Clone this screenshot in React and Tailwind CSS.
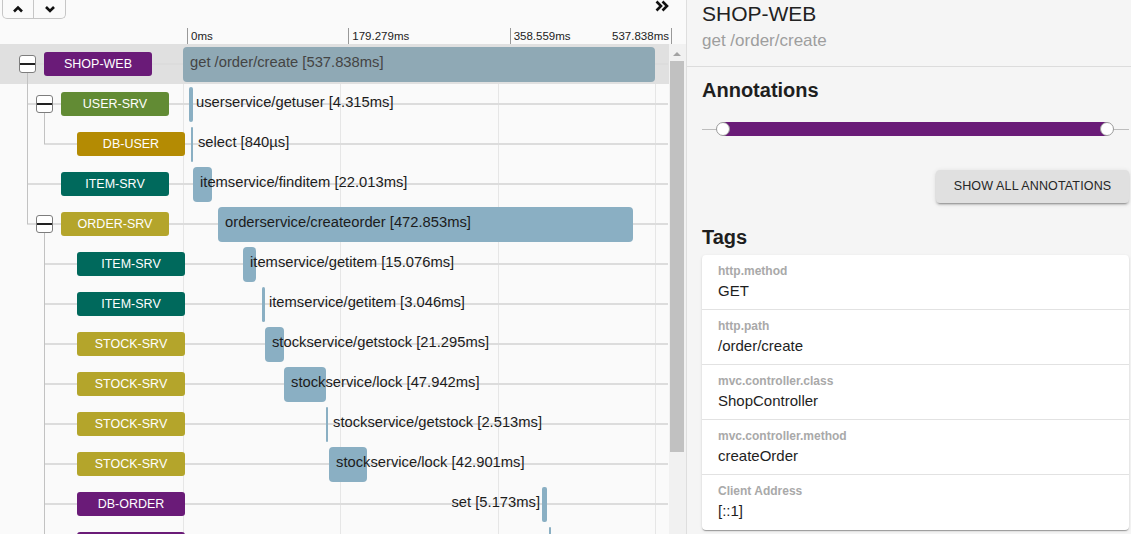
import React from 'react'

const TOTAL_MS = 537.838
const AXIS_PX = 472

const PURPLE = 'bg-[#6a1b78]'
const OLIVE = 'bg-[#b4a52b]'
const TEAL = 'bg-[#00695c]'

const spans = [
  { name: 'SHOP-WEB', color: PURPLE, box: true, pl: 'pl-[19px]', hx: 'left-[36px]', vlines: ['left-[27px] top-[29px] h-[11px]'], start: 0, dur: 537.838, label: 'get /order/create [537.838ms]', selected: true },
  { name: 'USER-SRV', color: 'bg-[#628b34]', box: true, pl: 'pl-[36px]', hx: 'left-[27px]', vlines: ['left-[27px] top-0 h-[40px]', 'left-[44px] top-[29px] h-[11px]'], start: 6.8, dur: 4.315, label: 'userservice/getuser [4.315ms]' },
  { name: 'DB-USER', color: 'bg-[#b48b03]', pl: 'pl-[77px]', hx: 'left-[44px]', vlines: ['left-[27px] top-0 h-[40px]', 'left-[44px] top-0 h-[20px]'], start: 9.1, dur: 0.84, label: 'select [840µs]' },
  { name: 'ITEM-SRV', color: TEAL, pl: 'pl-[61px]', hx: 'left-[27px]', vlines: ['left-[27px] top-0 h-[40px]'], start: 11.4, dur: 22.013, label: 'itemservice/finditem [22.013ms]' },
  { name: 'ORDER-SRV', color: OLIVE, box: true, pl: 'pl-[36px]', hx: 'left-[27px]', vlines: ['left-[27px] top-0 h-[20px]', 'left-[44px] top-[29px] h-[11px]'], start: 39.9, dur: 472.853, label: 'orderservice/createorder [472.853ms]' },
  { name: 'ITEM-SRV', color: TEAL, pl: 'pl-[77px]', hx: 'left-[44px]', vlines: ['left-[44px] top-0 h-[40px]'], start: 68.4, dur: 15.076, label: 'itemservice/getitem [15.076ms]' },
  { name: 'ITEM-SRV', color: TEAL, pl: 'pl-[77px]', hx: 'left-[44px]', vlines: ['left-[44px] top-0 h-[40px]'], start: 90.0, dur: 3.046, label: 'itemservice/getitem [3.046ms]' },
  { name: 'STOCK-SRV', color: OLIVE, pl: 'pl-[77px]', hx: 'left-[44px]', vlines: ['left-[44px] top-0 h-[40px]'], start: 93.4, dur: 21.295, label: 'stockservice/getstock [21.295ms]' },
  { name: 'STOCK-SRV', color: OLIVE, pl: 'pl-[77px]', hx: 'left-[44px]', vlines: ['left-[44px] top-0 h-[40px]'], start: 115.1, dur: 47.942, label: 'stockservice/lock [47.942ms]' },
  { name: 'STOCK-SRV', color: OLIVE, pl: 'pl-[77px]', hx: 'left-[44px]', vlines: ['left-[44px] top-0 h-[40px]'], start: 163.0, dur: 2.513, label: 'stockservice/getstock [2.513ms]' },
  { name: 'STOCK-SRV', color: OLIVE, pl: 'pl-[77px]', hx: 'left-[44px]', vlines: ['left-[44px] top-0 h-[40px]'], start: 166.4, dur: 42.901, label: 'stockservice/lock [42.901ms]' },
  { name: 'DB-ORDER', color: PURPLE, pl: 'pl-[77px]', hx: 'left-[44px]', vlines: ['left-[44px] top-0 h-[40px]'], start: 409.1, dur: 5.173, label: 'set [5.173ms]', before: true },
  { name: '', color: PURPLE, pl: 'pl-[77px]', hx: 'left-[44px]', vlines: ['left-[44px] top-0 h-[40px]'], start: 417.2, dur: 1.902, label: '', before: true },
]

const tags = [
  ['http.method', 'GET'],
  ['http.path', '/order/create'],
  ['mvc.controller.class', 'ShopController'],
  ['mvc.controller.method', 'createOrder'],
  ['Client Address', '[::1]'],
]

const toPx = (ms) => (ms / TOTAL_MS) * AXIS_PX

function Chevron({ dir }) {
  const pts = dir === 'up' ? '2,6.5 6,2.5 10,6.5' : '2,2 6,6 10,2'
  return (
    <svg width="12" height="9" viewBox="0 0 12 9">
      <polyline points={pts} fill="none" stroke="#111" strokeWidth="2.6" />
    </svg>
  )
}

function SpanRow({ s }) {
  const left = toPx(s.start)
  const width = Math.max(toPx(s.dur), 1.6)
  return (
    <div className={`relative flex h-[40px] ${s.selected ? 'bg-[#e0e0e0]' : ''}`}>
      <div className={`absolute top-[19px] right-[1px] h-[2px] bg-[#dcdcdc] ${s.hx}`} />
      {s.vlines.map((v, i) => (
        <div key={i} className={`absolute w-px bg-[#c2c2c2] ${v}`} />
      ))}
      <div className={`relative z-10 flex w-[183px] shrink-0 items-center gap-[8px] ${s.pl}`}>
        {s.box && (
          <div className="flex h-[18px] w-[17px] items-center rounded-[3px] border border-[#7d7d7d] bg-white">
            <div className="h-[2px] w-full bg-[#222]" />
          </div>
        )}
        <div className={`flex h-[24px] w-[108px] shrink-0 items-center justify-center rounded-[3px] text-[12.5px] text-white ${s.color}`}>
          {s.name}
        </div>
      </div>
      <div className="relative flex-1">
        <div
          className={`absolute top-[3px] h-[35px] ${width > 6 ? 'rounded-[4px]' : 'rounded-[2px]'} ${s.selected ? 'bg-[#8fa9b5]' : 'bg-[#8aafc3]'}`}
          style={{ left, width }}
        />
        {s.label && (
          <span
            className={`absolute top-[10px] whitespace-nowrap text-[14.75px] leading-[16px] ${s.selected ? 'text-[#444]' : 'text-[#1c1c1c]'} ${s.before ? '-translate-x-full' : ''}`}
            style={{ left: s.before ? left - 2 : left + 7 }}
          >
            {s.label}
          </span>
        )}
      </div>
    </div>
  )
}

export default function App() {
  return (
    <div className="flex h-[534px] w-[1131px] overflow-hidden font-['Liberation_Sans',Arial,sans-serif]">
      {/* trace timeline */}
      <div className="flex w-[686px] shrink-0 flex-col bg-[#fafafa]">
        <div className="flex h-[28px] shrink-0 items-start justify-between pr-[17px]">
          <div className="ml-[2px] flex h-[19px] rounded-b-[5px] border border-t-0 border-[#c6c6c6]">
            <button className="flex w-[31px] items-center justify-center border-r border-[#c6c6c6]">
              <Chevron dir="up" />
            </button>
            <button className="flex w-[31px] items-center justify-center">
              <Chevron dir="down" />
            </button>
          </div>
          <svg width="14" height="12" viewBox="0 0 14 12">
            <polyline points="1.5,1.5 6,6 1.5,10.5" fill="none" stroke="#111" strokeWidth="2.6" />
            <polyline points="7.5,1.5 12,6 7.5,10.5" fill="none" stroke="#111" strokeWidth="2.6" />
          </svg>
        </div>

        <div className="flex h-[16px] shrink-0 text-[11.5px] leading-[16px] text-[#222]">
          <div className="w-[187px] shrink-0" />
          <div className="grid w-[485px] grid-cols-3 border-r border-[#999]">
            <div className="border-l border-[#999] pl-[3px]">0ms</div>
            <div className="border-l border-[#999] pl-[3px]">179.279ms</div>
            <div className="flex justify-between border-l border-[#999] pl-[3px] pr-[2px]">
              <span>358.559ms</span>
              <span>537.838ms</span>
            </div>
          </div>
        </div>

        <div className="flex min-h-0 flex-1">
          <div className="relative w-[669px] shrink-0 overflow-hidden">
            <div className="absolute inset-y-0 left-[183px] grid w-[473px] grid-cols-3 border-r border-[#e6e6e6]">
              <div className="border-l border-[#e6e6e6]" />
              <div className="border-l border-[#e6e6e6]" />
              <div className="border-l border-[#e6e6e6]" />
            </div>
            {spans.map((s, i) => (
              <SpanRow key={i} s={s} />
            ))}
          </div>
          <div className="flex w-[17px] shrink-0 flex-col bg-[#f1f1f1]">
            <div className="flex h-[17px] justify-center pt-[8px] pr-[2px]">
              <div className="h-0 w-0 border-x-[4px] border-b-[4px] border-x-transparent border-b-[#a3a3a3]" />
            </div>
            <div className="ml-[1px] h-[391px] w-[14px] bg-[#c1c1c1]" />
          </div>
        </div>
      </div>

      {/* span detail */}
      <div className="flex flex-1 flex-col border-l border-[#dedede] bg-[#f5f5f5]">
        <div className="h-[67px] shrink-0 border-b border-[#dcdcdc] pl-[15px] pt-[2px]">
          <div className="text-[21px] leading-[24px] text-[#222]">SHOP-WEB</div>
          <div className="mt-[4px] text-[17px] leading-[22px] text-[#9e9e9e]">get /order/create</div>
        </div>

        <div className="flex flex-col pl-[15px] pr-[2px]">
          <h3 className="pt-[11px] text-[20px] font-bold leading-[24px] text-[#1e1e1e]">Annotations</h3>

          <div className="relative mt-[20px] h-[14px]">
            <div className="absolute inset-x-0 top-[7px] h-px bg-[#bdbdbd]" />
            <div className={`absolute left-[21px] right-[22px] top-0 h-[14px] ${PURPLE}`} />
            <div className="absolute left-[14px] top-0 h-[14px] w-[14px] rounded-full border border-[#9a9a9a] bg-white" />
            <div className="absolute left-[398px] top-0 h-[14px] w-[14px] rounded-full border border-[#9a9a9a] bg-white" />
          </div>

          <button className="mt-[34px] flex h-[33px] w-[193px] items-center justify-center self-end rounded-[4px] bg-[#e0e0e0] text-[12.5px] tracking-[0.15px] text-[#262626] shadow-[0_3px_1px_-2px_rgba(0,0,0,0.2),0_2px_2px_0_rgba(0,0,0,0.14),0_1px_5px_0_rgba(0,0,0,0.12)]">
            SHOW ALL ANNOTATIONS
          </button>

          <h3 className="mt-[22px] text-[20px] font-bold leading-[24px] text-[#1e1e1e]">Tags</h3>

          <div className="mt-[6px] rounded-[4px] bg-white shadow-[0_2px_1px_-1px_rgba(0,0,0,0.2),0_1px_1px_0_rgba(0,0,0,0.14),0_1px_3px_0_rgba(0,0,0,0.12)]">
            {tags.map(([k, v], i) => (
              <div key={k} className={`h-[55px] px-4 pt-[9px] ${i < tags.length - 1 ? 'border-b border-[#e2e2e2]' : ''}`}>
                <div className="text-[12px] font-bold leading-[14px] text-[#a9a9a9]">{k}</div>
                <div className="mt-[4px] text-[15px] leading-[18px] text-[#1e1e1e]">{v}</div>
              </div>
            ))}
          </div>
        </div>
      </div>
    </div>
  )
}
